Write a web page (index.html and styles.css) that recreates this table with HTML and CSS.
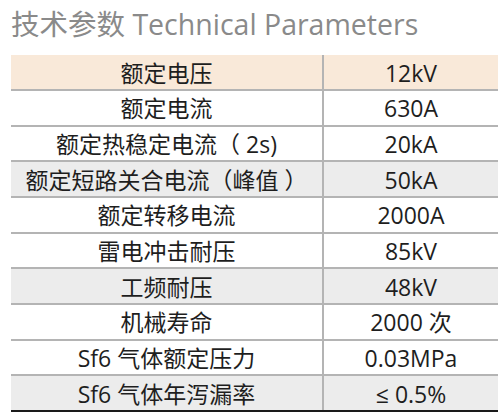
FILE: index.html
```html
<!DOCTYPE html>
<html>
<head>
<meta charset="utf-8">
<link rel="stylesheet" href="styles.css">
</head>
<body>
<h1 class="title">技术参数 Technical Parameters</h1>
<div class="table">
  <div class="row head"><div class="c1">额定电压</div><div class="c2">12kV</div></div>
  <div class="row"><div class="c1">额定电流</div><div class="c2">630A</div></div>
  <div class="row"><div class="c1">额定热稳定电流（ 2s)</div><div class="c2">20kA</div></div>
  <div class="row alt"><div class="c1">额定短路关合电流（峰值 ）</div><div class="c2">50kA</div></div>
  <div class="row"><div class="c1">额定转移电流</div><div class="c2">2000A</div></div>
  <div class="row"><div class="c1">雷电冲击耐压</div><div class="c2">85kV</div></div>
  <div class="row alt"><div class="c1">工频耐压</div><div class="c2">48kV</div></div>
  <div class="row"><div class="c1">机械寿命</div><div class="c2">2000 次</div></div>
  <div class="row"><div class="c1">Sf6 气体额定压力</div><div class="c2">0.03MPa</div></div>
  <div class="row alt last"><div class="c1">Sf6 气体年泻漏率</div><div class="c2">≤ 0.5%</div></div>
</div>
</body>
</html>
```
FILE: styles.css
```css
html, body {
  margin: 0;
  padding: 0;
  background: #fff;
}
body {
  width: 500px;
  height: 412px;
  overflow: hidden;
  font-family: "Open Sans", "Noto Sans CJK SC", sans-serif;
}
.title {
  margin: 0;
  padding: 6px 0 0 11px;
  height: 55px;
  box-sizing: border-box;
  font-size: 28.5px;
  font-weight: normal;
  color: #8a8a8a;
  line-height: 36px;
}
.table {
  margin-left: 11px;
  width: 487px;
  height: 357px;
  display: grid;
  grid-template-rows: 36px repeat(9, minmax(0, 1fr));
}
.row {
  display: grid;
  grid-template-columns: 313px 1fr;
  border-bottom: 2px solid #b4b4b4;
  color: #1e1e1e;
  font-size: 23px;
  line-height: 26px;
  min-height: 0;
  overflow: hidden;
}
.row > div {
  display: flex;
  align-items: center;
  justify-content: center;
  white-space: nowrap;
  padding-top: 1px;
}
.c1 {
  border-right: 2px solid #b4b4b4;
}
.head {
  background: #f9e9d9;
}
.alt {
  background: #ececec;
}
.last {
  border-bottom-color: #1a1a1a;
}
```
